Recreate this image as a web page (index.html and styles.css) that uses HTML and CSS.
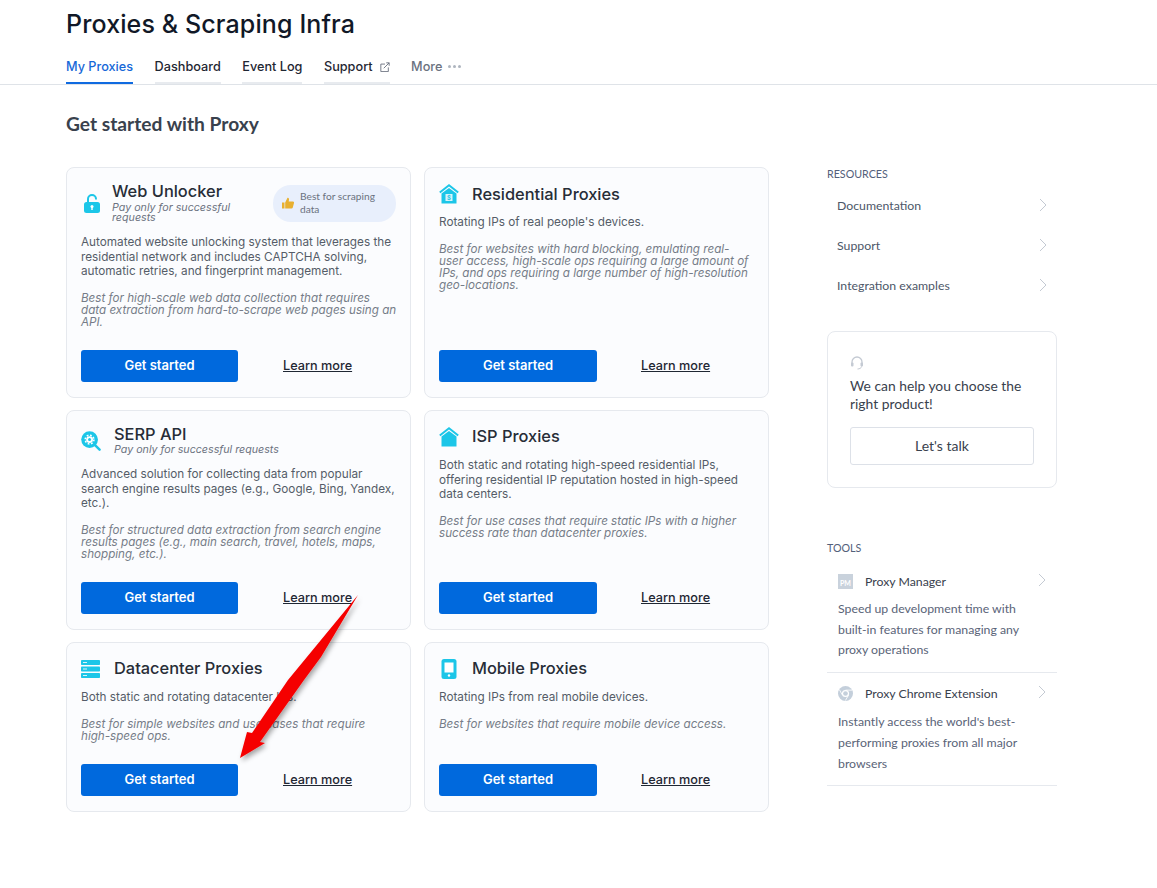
FILE: index.html
```html
<!DOCTYPE html>
<html lang="en">
<head>
  <meta charset="UTF-8" />
  <title>Proxies &amp; Scraping Infra</title>
  <link rel="stylesheet" href="styles.css">
</head>
<body>
  <header class="top">
    <h1>Proxies &amp; Scraping Infra</h1>
    <nav class="tabs">
      <a class="tab active">My Proxies</a>
      <a class="tab">Dashboard</a>
      <a class="tab">Event Log</a>
      <a class="tab">Support
        <svg class="ext" viewBox="0 0 12 12" width="10" height="10" fill="none" stroke="#6b7280" stroke-width="1.100"><path d="M6 2.500H1v9h9V6.500"/><path d="M4.500 7.500 11 1M7.500 1H11v3.500"/></svg>
      </a>
      <a class="tab more">More <span class="dots"><i></i><i></i><i></i></span></a>
    </nav>
  </header>

  <main class="page">
    <section class="left">
      <h2>Get started with Proxy</h2>
      <div class="grid">

        <article class="card">
          <div class="head head-web">
            <svg class="icon lock" viewBox="0 0 16 19" width="16" height="19"><path fill="none" stroke="#1cc6e8" stroke-width="2" d="M4 8.500V5a4 4 0 0 1 8 0v.5"/><rect y="8" width="16" height="11" rx="2.500" fill="#1cc6e8"/><circle cx="8" cy="12.500" r="1.500" fill="#fff"/><rect x="7.300" y="13" width="1.400" height="3" fill="#fff"/></svg>
            <div class="names">
              <h3>Web Unlocker</h3>
              <p class="sub">Pay only for successful requests</p>
            </div>
            <div class="badge">
              <svg viewBox="0 0 12 12" width="12" height="12"><path fill="#e8b030" d="M0 5.500h2.500V11.500H0zM3.200 5.500 5.500.8c1 0 1.700.7 1.500 1.800L6.700 4.500H11c.8 0 1.200.7 1 1.400L10.800 10.500c-.2.6-.6 1-1.300 1H3.200z"/></svg>
              <span>Best for scraping data</span>
            </div>
          </div>
          <p class="desc">Automated website unlocking system that leverages the residential network and includes CAPTCHA solving, automatic retries, and fingerprint management.</p>
          <p class="best">Best for high-scale web data collection that requires data extraction from hard-to-scrape web pages using an API.</p>
          <div class="actions"><a class="btn">Get started</a><a class="learn">Learn more</a></div>
        </article>

        <article class="card">
          <div class="head">
            <svg class="icon" viewBox="0 0 20 20" width="20" height="20"><path fill="none" stroke="#1cc6e8" stroke-width="2" d="M.8 8.500 10 1.300l9.200 7.200"/><path fill="#1cc6e8" d="M2.500 9.500 10 4l7.500 5.500V19.500h-15z"/><rect x="6.500" y="10" width="7" height="7" fill="#d8f4fa"/><text class="dollar" x="10" y="15.500" text-anchor="middle">$</text></svg>
            <h3>Residential Proxies</h3>
          </div>
          <p class="desc">Rotating IPs of real people's devices.</p>
          <p class="best">Best for websites with hard blocking, emulating real-user access, high-scale ops requiring a large amount of IPs, and ops requiring a large number of high-resolution geo-locations.</p>
          <div class="actions"><a class="btn">Get started</a><a class="learn">Learn more</a></div>
        </article>

        <article class="card">
          <div class="head head-sub">
            <svg class="icon" viewBox="0 0 21 21" width="20" height="20"><circle cx="9" cy="9" r="8.800" fill="#1cc6e8"/><circle cx="9" cy="9" r="3.600" fill="#fff"/><circle cx="9" cy="9" r="4.600" fill="none" stroke="#fff" stroke-width="1.600" stroke-dasharray="1.900 1.700"/><circle cx="9" cy="9" r="1.600" fill="#1cc6e8"/><path stroke="#1cc6e8" stroke-width="2.600" stroke-linecap="round" d="m15 15 4.500 4.500"/></svg>
            <div class="names">
              <h3>SERP API</h3>
              <p class="sub">Pay only for successful requests</p>
            </div>
          </div>
          <p class="desc">Advanced solution for collecting data from popular search engine results pages (e.g., Google, Bing, Yandex, etc.).</p>
          <p class="best">Best for structured data extraction from search engine results pages (e.g., main search, travel, hotels, maps, shopping, etc.).</p>
          <div class="actions"><a class="btn">Get started</a><a class="learn">Learn more</a></div>
        </article>

        <article class="card">
          <div class="head">
            <svg class="icon" viewBox="0 0 20 20" width="20" height="20"><path fill="none" stroke="#1cc6e8" stroke-width="2" d="M.8 8.500 10 1.300l9.200 7.200"/><path fill="#1cc6e8" d="M2.500 9.500 10 4l7.500 5.500V19.500h-15z"/></svg>
            <h3>ISP Proxies</h3>
          </div>
          <p class="desc">Both static and rotating high-speed residential IPs, offering residential IP reputation hosted in high-speed data centers.</p>
          <p class="best">Best for use cases that require static IPs with a higher success rate than datacenter proxies.</p>
          <div class="actions"><a class="btn">Get started</a><a class="learn">Learn more</a></div>
        </article>

        <article class="card">
          <div class="head">
            <svg class="icon" viewBox="0 0 20 18" width="20" height="18"><rect width="19" height="5" rx=".8" fill="#1cc6e8"/><rect y="6.500" width="19" height="5" rx=".8" fill="#1cc6e8"/><rect y="13" width="19" height="5" rx=".8" fill="#1cc6e8"/><path stroke="#d8f4fa" d="M2 2.500h4M2 9h4M2 15.500h4"/></svg>
            <h3>Datacenter Proxies</h3>
          </div>
          <p class="desc">Both static and rotating datacenter IPs.</p>
          <p class="best">Best for simple websites and use cases that require high-speed ops.</p>
          <div class="actions"><a class="btn">Get started</a><a class="learn">Learn more</a></div>
        </article>

        <article class="card">
          <div class="head">
            <svg class="icon" viewBox="0 0 20 20" width="20" height="20"><rect x="2.500" width="15" height="20" rx="2.500" fill="#1cc6e8"/><rect x="5.500" y="3.500" width="9" height="10" fill="#fff"/><circle cx="10" cy="16.500" r="1.200" fill="#fff"/></svg>
            <h3>Mobile Proxies</h3>
          </div>
          <p class="desc">Rotating IPs from real mobile devices.</p>
          <p class="best">Best for websites that require mobile device access.</p>
          <div class="actions"><a class="btn">Get started</a><a class="learn">Learn more</a></div>
        </article>

      </div>
    </section>

    <aside class="side">
      <h4>RESOURCES</h4>
      <ul class="links">
        <li>Documentation <svg class="chev" viewBox="0 0 8 14" width="8" height="14"><path d="m1 1 6 6-6 6" fill="none" stroke="#c4cad3"/></svg></li>
        <li>Support <svg class="chev" viewBox="0 0 8 14" width="8" height="14"><path d="m1 1 6 6-6 6" fill="none" stroke="#c4cad3"/></svg></li>
        <li>Integration examples <svg class="chev" viewBox="0 0 8 14" width="8" height="14"><path d="m1 1 6 6-6 6" fill="none" stroke="#c4cad3"/></svg></li>
      </ul>

      <div class="help">
        <svg class="headset" viewBox="0 0 14 14" width="14" height="14"><path d="M2 8V6a5 5 0 0 1 10 0v2" fill="none" stroke="#c4cad3" stroke-width="1.300"/><rect x="1" y="6.500" width="2.500" height="4" rx="1" fill="#c4cad3"/><rect x="10.500" y="6.500" width="2.500" height="4" rx="1" fill="#c4cad3"/><path d="M11.500 10.500c0 1.500-2 2.500-4 2.500" fill="none" stroke="#c4cad3"/></svg>
        <p>We can help you choose the right product!</p>
        <a class="talk">Let's talk</a>
      </div>

      <h4 class="tools-title">TOOLS</h4>
      <div class="tool">
        <div class="tool-head">
          <span class="pm">PM</span>
          <span class="tool-name">Proxy Manager</span>
          <svg class="chev" viewBox="0 0 8 14" width="8" height="14"><path d="m1 1 6 6-6 6" fill="none" stroke="#c4cad3"/></svg>
        </div>
        <p>Speed up development time with built-in features for managing any proxy operations</p>
      </div>
      <div class="tool">
        <div class="tool-head">
          <svg class="tool-icon" viewBox="0 0 16 16" width="15" height="15"><circle cx="8" cy="8" r="8" fill="#c4cfdb"/><circle cx="8" cy="8" r="3.800" fill="#fff"/><circle cx="8" cy="8" r="2.500" fill="#c4cfdb"/><path stroke="#fff" stroke-width=".9" fill="none" d="M8 4.400h7M4.800 9.800 1.500 4M11.200 9.800 7.800 15.600"/></svg>
          <span class="tool-name">Proxy Chrome Extension</span>
          <svg class="chev" viewBox="0 0 8 14" width="8" height="14"><path d="m1 1 6 6-6 6" fill="none" stroke="#c4cad3"/></svg>
        </div>
        <p>Instantly access the world's best-performing proxies from all major browsers</p>
      </div>
    </aside>
  </main>

  <!-- red annotation arrow drawn over the screenshot -->
  <svg class="arrow" viewBox="0 0 1157 888" width="1157" height="888">
    <defs><filter id="sh" x="-20%" y="-20%" width="150%" height="150%"><feDropShadow dx="2" dy="3" stdDeviation="2.500" flood-color="#000" flood-opacity=".35"/></filter></defs>
    <polygon points="358,595 321,657 304,680 260,742 265,743 240,758 247,732 252,733 288,680" fill="#f50000" filter="url(#sh)"/>
  </svg>
</body>
</html>
```

FILE: styles.css
```css
* { box-sizing: border-box; }
body { margin: 0; background: #fff; font-family: Inter, "Liberation Sans", sans-serif; color: #1f2733; }
h1, h2, h3, h4, p, ul { margin: 0; padding: 0; }

.top { height: 85px; padding: 9px 0 0 66px; border-bottom: 1px solid #dfe3e8; }
.top h1 { font-size: 25px; font-weight: 500; line-height: 30px; letter-spacing: .12px; color: #111827; }
.tabs { display: flex; gap: 21.500px; margin-top: 10px; }
.tab { display: flex; align-items: center; gap: 7px; height: 35px; padding-top: 2px; font-size: 12.700px; font-weight: 500; color: #1f2733; border-bottom: 2px solid #e8ebef; white-space: nowrap; }
.tab.active { color: #1668d8; border-bottom-color: #0f6ae0; }
.tab.more { color: #6b7280; border-bottom-color: transparent; gap: 6px; }
.dots { display: flex; gap: 2px; }
.dots i { width: 3px; height: 3px; border-radius: 50%; background: #aeb5bf; }

.page { display: flex; gap: 58px; padding-left: 66px; }
.left { width: 703px; }
.left h2 { font-family: Lato, sans-serif; font-size: 19.200px; font-weight: 700; line-height: 24px; color: #39414d; margin-top: 27px; }
.grid { display: grid; grid-template-columns: 345px 345px; grid-template-rows: 231px 220px 170px; column-gap: 13px; row-gap: 12px; margin-top: 31px; }

.card { display: flex; flex-direction: column; padding: 16px 13px 15px 14px; background: #fbfcfe; border: 1px solid #e6e9ee; border-radius: 8px; }
.card:nth-child(even) { padding-right: 15px; }
.head { display: flex; align-items: center; gap: 13px; height: 20px; margin-bottom: 11px; }
.dollar { font-size: 6px; font-weight: 700; fill: #1cc6e8; }
h3 { font-size: 16.400px; font-weight: 500; line-height: 18px; color: #272d37; }
.card:nth-child(n+3) .head > h3 { margin-top: -2px; }
.names { flex: 1; margin-top: -2px; }
.sub { font-size: 10.700px; font-style: italic; line-height: 10px; color: #6b7280; }
.head-sub { align-items: flex-start; height: 29px; }
.head-sub .icon { margin-top: 4px; }
.head-sub .sub { margin-top: 2px; }
.head-web { align-items: flex-start; gap: 12px; height: 38px; margin-bottom: 13px; padding-left: 3px; padding-right: 1px; }
.head-web .icon { margin-top: 10px; flex-shrink: 0; }
.head-web .sub { margin-top: 3px; }
.badge { display: flex; align-items: center; gap: 6px; width: 123px; height: 37px; padding: 0 9px 2px; margin-top: 1px; border-radius: 18px; background: #e8effc; font-family: Lato, sans-serif; font-size: 10.200px; line-height: 13px; color: #6b7280; flex-shrink: 0; }
.badge svg { flex-shrink: 0; }
.desc { font-size: 11.750px; line-height: 14.500px; color: #555c68; }
.best { font-size: 11.650px; font-style: italic; line-height: 12px; color: #767c88; margin-top: 13px; }
.actions { display: flex; align-items: center; margin-top: auto; }
.btn { display: flex; justify-content: center; align-items: center; width: 157px; height: 32px; padding-bottom: 2px; background: #0069dd; border-radius: 3px; color: #fff; font-size: 13px; font-weight: 600; }
.learn { margin-left: 45px; margin-top: -1px; font-size: 12.700px; font-weight: 500; color: #1f2733; text-decoration: underline; }
.card:nth-child(even) .btn { width: 158px; }
.card:nth-child(even) .learn { margin-left: 44px; }

.side { width: 230px; font-family: Lato, sans-serif; }
.side h4 { font-size: 10.700px; font-weight: 400; line-height: 14px; color: #53607a; margin-top: 82px; }
.links { list-style: none; margin-top: 4px; }
.links li { display: flex; justify-content: space-between; align-items: center; height: 40px; padding: 0 10px; font-size: 12.300px; color: #4d5769; }
.chev { flex-shrink: 0; }
.help { height: 157px; margin-top: 26px; padding: 24px 22px 0; border: 1px solid #e6e9ee; border-radius: 8px; }
.headset { display: block; }
.help p { font-size: 13.850px; line-height: 18px; color: #39414d; margin-top: 7px; }
.talk { display: flex; justify-content: center; align-items: center; height: 38px; margin-top: 14px; padding-bottom: 1px; border: 1px solid #dde1e8; border-radius: 3px; font-size: 14px; color: #39414d; }
.side .tools-title { margin-top: 53px; margin-bottom: 6px; }
.tool { padding: 9px 0 11px 11px; border-bottom: 1px solid #e6e9ee; }
.tool-head { display: flex; align-items: center; height: 22px; padding-right: 11px; font-size: 12.300px; color: #39414d; }
.tool-head .chev { margin-top: -2px; }
.tool-name { flex: 1; margin-left: 12px; }
.pm { display: flex; justify-content: center; align-items: center; width: 15px; height: 15px; padding-top: 3px; background: #c9d2dc; color: #fff; font-size: 7px; font-weight: 700; }
.tool p { padding-right: 10px; font-size: 12.300px; line-height: 20.700px; color: #5a6478; margin-top: 7px; }
.tool + .tool p { margin-top: 8px; }

.arrow { position: absolute; left: 0; top: 0; pointer-events: none; }
```
